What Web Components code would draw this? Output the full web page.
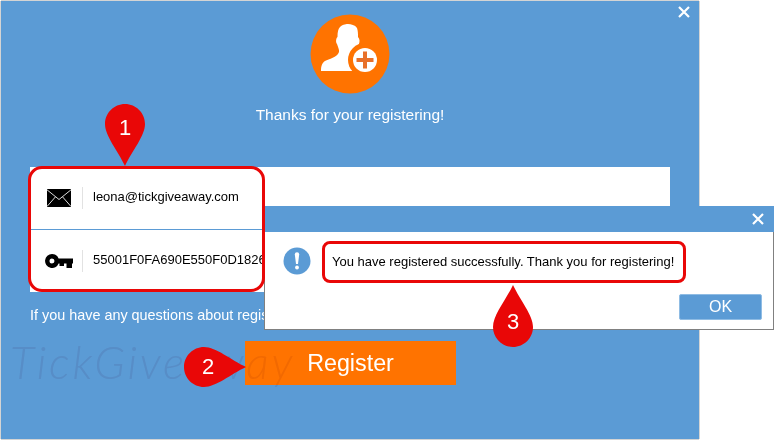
<!DOCTYPE html>
<html>
<head>
<meta charset="utf-8">
<style>
  html, body { margin: 0; height: 440px; overflow: hidden; background: #fff; }
  body { font-family: "Liberation Sans", Arial, sans-serif; position: relative; }
</style>
</head>
<body>
<register-window>
  <avatar-badge></avatar-badge>
  <span slot="title">Thanks for your registering!</span>
  <field-card>
    <field-row icon="mail">leona@tickgiveaway.com</field-row>
    <field-row icon="key">55001F0FA690E550F0D1826</field-row>
  </field-card>
  <span slot="hint">If you have any questions about registering</span>
  <action-button>Register</action-button>
</register-window>

<message-dialog>You have registered successfully. Thank you for registering!</message-dialog>

<water-mark>TickGiveaway</water-mark>

<highlight-box style="left:28px;top:166px;width:237px;height:126px;--r:14px"></highlight-box>
<highlight-box style="left:322px;top:241px;width:364px;height:42px;--r:8px"></highlight-box>

<callout-pin num="1" dir="down" style="left:105px;top:104px"></callout-pin>
<callout-pin num="2" dir="right" style="left:184px;top:347px"></callout-pin>
<callout-pin num="3" dir="up" style="left:493px;top:285px"></callout-pin>

<script>
const closeSvg = `<svg width="12" height="12" viewBox="0 0 12 12"><path d="M1 1L11 11M11 1L1 11" stroke="#fff" stroke-width="2.2" fill="none"/></svg>`;

class RegisterWindow extends HTMLElement {
    constructor() {
        super();
        this.attachShadow({ mode: 'open' });
        this.shadowRoot.innerHTML = `
            <style>
                :host {
                    display: block;
                    position: relative;
                    box-sizing: border-box;
                    width: 698px;
                    height: 438px;
                    margin: 1px 0 0 1px;
                    background: #5b9bd5;
                    color: #fff;
                    box-shadow: 0 -1px 0 #d4d4d4, -1px 0 0 #d4d4d4, 1px 0 0 #d4d4d4, 0 1px 0 #d4d4d4;
                }
                .wrap {
                    display: flex;
                    flex-direction: column;
                    align-items: center;
                    padding-top: 13px;
                }
                .title {
                    font-size: 15.5px;
                    line-height: 20px;
                    margin-top: 11px;
                    margin-bottom: 42px;
                }
                .hint {
                    align-self: flex-start;
                    margin: 14px 0 0 29px;
                    font-size: 14.4px;
                    line-height: 18px;
                    white-space: nowrap;
                }
                .action {
                    align-self: flex-start;
                    margin: 17px 0 0 244px;
                }
                .close {
                    position: absolute;
                    right: 9px;
                    top: 5px;
                    line-height: 0;
                }
            </style>
            <div class="close">${closeSvg}</div>
            <div class="wrap">
                <slot></slot>
                <div class="title"><slot name="title"></slot></div>
                <slot name="fields"></slot>
                <div class="hint"><slot name="hint"></slot></div>
                <div class="action"><slot name="action"></slot></div>
            </div>
        `;
    }

    connectedCallback() {
        this.querySelector('field-card').slot = 'fields';
        this.querySelector('action-button').slot = 'action';
    }
}

class AvatarBadge extends HTMLElement {
    constructor() {
        super();
        this.attachShadow({ mode: 'open' });
        this.shadowRoot.innerHTML = `
            <style>
                :host { display: block; width: 80px; height: 80px; line-height: 0; margin-left: -1px; }
            </style>
            <svg width="80" height="80" viewBox="0 0 80 80">
                <circle cx="40" cy="40" r="39.500" fill="#ff7300"/>
                <path fill="#fff" d="M11 57C11 52 12 49 15 47C19 44.500 27 44 29 38C29.500 36 28 33 27 30C25.500 28 26 24 27.500 23C27.500 18 28 15 30 13C33 10 37 10 38 10C41 10 45 11 47 14C48 17 48 20 48 23C50 25 50 28 48.500 31C47 35 47 39 50 42L60 57Z"/>
                <circle cx="55" cy="46" r="17" fill="#ff7300"/>
                <circle cx="55" cy="46" r="12" fill="#fff"/>
                <path fill="#e8702a" d="M53 37.500h4V44h6.500v4H57v6.500h-4V48h-6.500v-4H53z"/>
            </svg>
        `;
    }
}

class FieldCard extends HTMLElement {
    constructor() {
        super();
        this.attachShadow({ mode: 'open' });
        this.shadowRoot.innerHTML = `
            <style>
                :host {
                    display: flex;
                    flex-direction: column;
                    width: 640px;
                    background: #fff;
                    color: #000;
                }
                ::slotted(field-row:first-child) { border-bottom: 1px solid #5b9bd5; height: 63px; }
            </style>
            <slot></slot>
        `;
    }
}

class FieldRow extends HTMLElement {
    constructor() {
        super();
        const icons = {
            mail: `<svg width="24" height="18" viewBox="0 0 24 18">
                <rect width="24" height="18" fill="#000"/>
                <path d="M0 .8L12 10.500L24 .8M0 17.500L8.500 7.800M24 17.500L15.500 7.800" stroke="#ddd" stroke-width="1" fill="none"/>
            </svg>`,
            key: `<svg width="28" height="14" viewBox="0 0 28 14">
                <path fill-rule="evenodd" d="M7 0a7 7 0 0 1 6.600 4.500H28v5h-1V14h-5.500V9.500H19V12h-4.500V9.500h-.9A7 7 0 1 1 7 0zM7 4.500a2.500 2.500 0 1 0 0 5a2.500 2.500 0 0 0 0-5z"/>
            </svg>`
        };
        const icon = icons[this.getAttribute('icon')] || '';
        this.attachShadow({ mode: 'open' });
        this.shadowRoot.innerHTML = `
            <style>
                :host {
                    display: flex;
                    align-items: center;
                    box-sizing: border-box;
                    height: 62px;
                    padding-left: 14px;
                    font-size: 13px;
                    white-space: nowrap;
                }
                .icon {
                    display: flex;
                    justify-content: center;
                    width: 30px;
                    line-height: 0;
                }
                .line {
                    width: 1px;
                    height: 22px;
                    margin: 0 10px 0 8px;
                    background: #e2e2e2;
                }
                .text { margin-bottom: 4px; }
            </style>
            <span class="icon">${icon}</span>
            <span class="line"></span>
            <span class="text"><slot></slot></span>
        `;
    }
}

class ActionButton extends HTMLElement {
    constructor() {
        super();
        this.attachShadow({ mode: 'open' });
        this.shadowRoot.innerHTML = `
            <style>
                :host {
                    display: flex;
                    align-items: center;
                    justify-content: center;
                    width: 211px;
                    height: 44px;
                    background: #ff7300;
                    color: #fff;
                    font-size: 23.3px;
                }
            </style>
            <slot></slot>
        `;
    }
}

class MessageDialog extends HTMLElement {
    constructor() {
        super();
        this.attachShadow({ mode: 'open' });
        this.shadowRoot.innerHTML = `
            <style>
                :host {
                    display: flex;
                    flex-direction: column;
                    position: absolute;
                    left: 264px;
                    top: 206px;
                    box-sizing: border-box;
                    width: 510px;
                    height: 124px;
                    background: #fff;
                    border-left: 1px solid #808080;
                    border-bottom: 1px solid #808080;
                    border-right: 1px solid #808080;
                    color: #000;
                }
                .bar {
                    display: flex;
                    justify-content: flex-end;
                    align-items: center;
                    height: 26px;
                    padding-right: 10px;
                    margin: 0 -1px;
                    background: #5b9bd5;
                }
                .bar svg { display: block; }
                .body {
                    display: flex;
                    align-items: center;
                    gap: 21px;
                    padding: 15px 0 0 18px;
                    font-size: 13px;
                    white-space: nowrap;
                }
                .foot {
                    display: flex;
                    justify-content: flex-end;
                    padding: 19px 11px 0 0;
                }
                .ok {
                    display: flex;
                    align-items: center;
                    justify-content: center;
                    box-sizing: border-box;
                    width: 83px;
                    height: 26px;
                    background: #5b9bd5;
                    border: 1px solid #8fbce4;
                    border-radius: 2px;
                    color: #fff;
                    font-size: 16px;
                }
            </style>
            <div class="bar">${closeSvg}</div>
            <div class="body">
                <svg width="28" height="28" viewBox="0 0 28 28">
                    <circle cx="14" cy="14" r="13.500" fill="#5b9bd5"/>
                    <path fill="#fff" d="M11.800 7.500a2.200 2.200 0 0 1 4.400 0L15 17h-2z"/>
                    <circle cx="14" cy="20.500" r="1.900" fill="#fff"/>
                </svg>
                <span><slot></slot></span>
            </div>
            <div class="foot"><div class="ok">OK</div></div>
        `;
    }
}

class HighlightBox extends HTMLElement {
    constructor() {
        super();
        this.attachShadow({ mode: 'open' });
        this.shadowRoot.innerHTML = `
            <style>
                :host {
                    display: block;
                    position: absolute;
                    box-sizing: border-box;
                    border: 3px solid #e90707;
                    border-radius: var(--r, 10px);
                    pointer-events: none;
                }
            </style>
        `;
    }
}

class CalloutPin extends HTMLElement {
    constructor() {
        super();
        const dir = this.getAttribute('dir');
        const num = this.getAttribute('num') || '';
        // same teardrop shape, turned to point at its target. x,y = centre of the number
        const shapes = {
            down: { w: 40, h: 62, d: 'M20 0C31 0 40 9 40 20C40 32 27 47 20 62C13 47 0 32 0 20C0 9 9 0 20 0Z', x: 20, y: 24 },
            up: { w: 40, h: 62, d: 'M20 62C31 62 40 53 40 42C40 30 27 15 20 0C13 15 0 30 0 42C0 53 9 62 20 62Z', x: 20, y: 37 },
            right: { w: 62, h: 40, d: 'M0 20C0 9 9 0 20 0C32 0 47 13 62 20C47 27 32 40 20 40C9 40 0 31 0 20Z', x: 24, y: 20 }
        };
        const s = shapes[dir] || shapes.down;
        this.attachShadow({ mode: 'open' });
        this.shadowRoot.innerHTML = `
            <style>
                :host {
                    display: block;
                    position: absolute;
                    width: ${s.w}px;
                    height: ${s.h}px;
                }
                svg { position: absolute; left: 0; top: 0; }
                span {
                    position: absolute;
                    left: ${s.x - 20}px;
                    top: ${s.y - 20}px;
                    width: 40px;
                    height: 40px;
                    line-height: 40px;
                    text-align: center;
                    color: #fff;
                    font-size: 22px;
                }
            </style>
            <svg width="${s.w}" height="${s.h}" viewBox="0 0 ${s.w} ${s.h}"><path d="${s.d}" fill="#e90707"/></svg>
            <span>${num}</span>
        `;
    }
}

class WaterMark extends HTMLElement {
    constructor() {
        super();
        this.attachShadow({ mode: 'open' });
        this.shadowRoot.innerHTML = `
            <style>
                :host {
                    display: block;
                    position: absolute;
                    left: 10px;
                    top: 337px;
                    font-family: Lato, sans-serif;
                    font-weight: 300;
                    font-style: italic;
                    font-size: 45px;
                    letter-spacing: 2.800px;
                    line-height: 50px;
                    color: #f2e8ee;
                    mix-blend-mode: multiply;
                    pointer-events: none;
                }
            </style>
            <slot></slot>
        `;
    }
}

customElements.define('register-window', RegisterWindow);
customElements.define('avatar-badge', AvatarBadge);
customElements.define('field-card', FieldCard);
customElements.define('field-row', FieldRow);
customElements.define('action-button', ActionButton);
customElements.define('message-dialog', MessageDialog);
customElements.define('highlight-box', HighlightBox);
customElements.define('callout-pin', CalloutPin);
customElements.define('water-mark', WaterMark);
</script>
</body>
</html>
